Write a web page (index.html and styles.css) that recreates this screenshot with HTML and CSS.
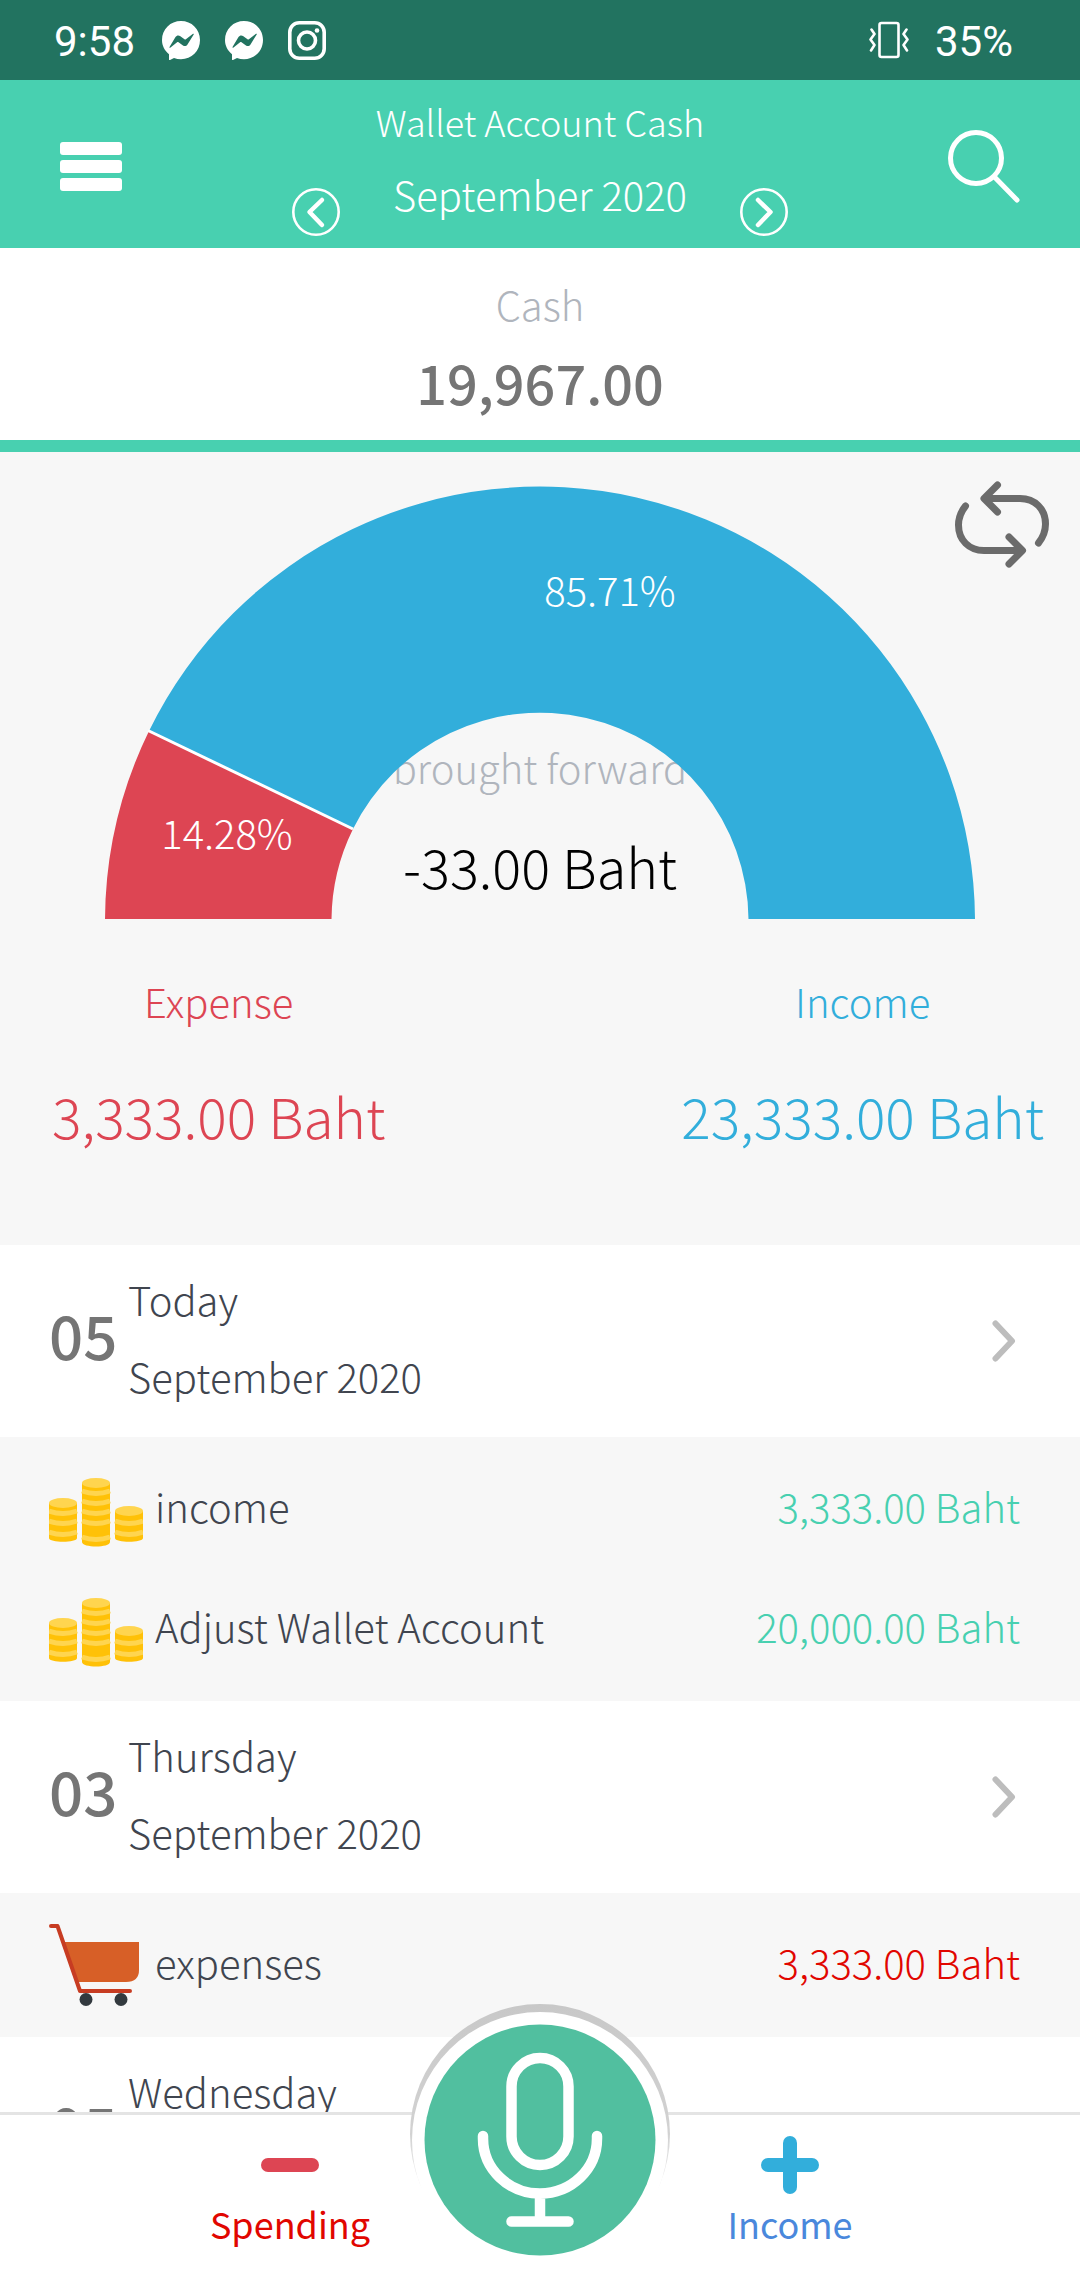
FILE: index.html
```html
<!DOCTYPE html>
<html lang="en">
<head>
<meta charset="utf-8">
<meta name="viewport" content="width=device-width, initial-scale=1">
<title>Wallet Account Cash</title>
<link rel="stylesheet" href="styles.css">
</head>
<body>
<svg class="defs" aria-hidden="true">
  <symbol id="messenger" viewBox="0 0 38 39">
    <path fill="#fff" d="M19 0C8.500 0 0 8 0 19c0 5.800 2.700 10.700 7 14.200V38.500c0 .5.500.6 1 .4l4-1.900c2.200.8 4.500 1.200 7 1.200C29.500 38.200 38 30 38 19S29.500 0 19 0z"/>
    <path fill="#227360" d="M7.500 26 13.500 16c1-1.600 3-2 4.500-1l4.500 3.200c.4.300 1 .3 1.400 0L31 12.800c.500-.3 1 .1.700.6L25.500 23.500c-1 1.600-3 2-4.500 1L16.500 21.200c-.4-.3-1-.3-1.400 0L8.200 26.700c-.5.300-1-.2-.7-.7z"/>
  </symbol>
  <symbol id="coins" viewBox="0 0 94 69">
    <g fill="#ffc107">
      <path d="M0 25v35c0 5 28 5 28 0V25z"/>
      <path d="M33 5v59c0 6 28 6 28 0V5z"/>
      <path d="M66 33v27c0 5 28 5 28 0V33z"/>
    </g>
    <g fill="#ffd54f">
      <ellipse cx="14" cy="25" rx="14" ry="5"/>
      <ellipse cx="47" cy="5" rx="14" ry="5"/>
      <ellipse cx="80" cy="33" rx="14" ry="5"/>
    </g>
    <g fill="none" stroke="#ffd54f" stroke-width="5">
      <path d="M0 33q14 5 28 0M0 43q14 5 28 0M0 54q14 5 28 0"/>
      <path d="M33 13q14 5 28 0M33 23q14 5 28 0M33 33q14 5 28 0M33 43q14 5 28 0M33 59q14 5 28 0"/>
      <path d="M66 43q14 5 28 0M66 54q14 5 28 0"/>
    </g>
  </symbol>
  <symbol id="cart" viewBox="0 0 90 82">
    <path fill="#d75f27" d="M14 18h76v28q0 12-13 12H29z"/>
    <path fill="none" stroke="#c73c22" stroke-width="4" stroke-linecap="round" stroke-linejoin="round" d="M2 2h6.500l22.500 65h50"/>
    <circle cx="37" cy="75.500" r="6.500" fill="#333a3f"/>
    <circle cx="72" cy="75.500" r="6.500" fill="#333a3f"/>
  </symbol>
  <symbol id="chevron" viewBox="0 0 24 42">
    <path fill="none" stroke="#bdbdbd" stroke-width="6" stroke-linecap="round" stroke-linejoin="round" d="M3.500 3.500 20 21 3.500 38.500"/>
  </symbol>
</svg>

<div class="app">
  <div class="status">
    <span>9:58</span>
    <div class="status-icons">
      <svg width="38" height="39"><use href="#messenger"/></svg>
      <svg width="38" height="39"><use href="#messenger"/></svg>
      <svg width="38" height="39" viewBox="0 0 38 39" fill="none" stroke="#fff" stroke-width="3.600">
        <rect x="1.800" y="1.800" width="34.400" height="35.400" rx="9.500"/>
        <circle cx="19" cy="19.500" r="8.500"/>
        <circle cx="29" cy="9.500" r="2.300" fill="#fff" stroke="none"/>
      </svg>
    </div>
    <svg class="vibrate" width="40" height="38" viewBox="0 0 40 38" fill="none" stroke="#fff" stroke-width="2.600" stroke-linecap="round" stroke-linejoin="round">
      <rect x="10.500" y="2" width="19" height="34" rx="2"/>
      <path d="M2.500 8.500 5.500 13l-4 5.500 4 5.500-3.500 5.500M37.500 8.500 34.500 13l4 5.500-4 5.500 3.500 5.500"/>
    </svg>
    <span>35%</span>
  </div>

  <header class="header">
    <button class="icon-button" aria-label="Menu">
      <svg width="62" height="49" viewBox="0 0 62 49" fill="#fff"><rect width="62" height="13" rx="3"/><rect y="18" width="62" height="13" rx="3"/><rect y="36" width="62" height="13" rx="3"/></svg>
    </button>
    <div class="header-main">
      <h1 class="title">Wallet Account Cash</h1>
      <div class="month">
        <button class="icon-button" aria-label="Previous month">
          <svg width="48" height="48" viewBox="0 0 48 48" fill="none" stroke="#fff" stroke-linecap="round" stroke-linejoin="round"><circle cx="24" cy="24" r="22.700" stroke-width="2.600"/><path stroke-width="4.500" d="M30 12 17.500 24 30 37"/></svg>
        </button>
        <span class="month-label">September 2020</span>
        <button class="icon-button" aria-label="Next month">
          <svg width="48" height="48" viewBox="0 0 48 48" fill="none" stroke="#fff" stroke-linecap="round" stroke-linejoin="round"><circle cx="24" cy="24" r="22.700" stroke-width="2.600"/><path stroke-width="4.500" d="M18 12 30.500 24 18 37"/></svg>
        </button>
      </div>
    </div>
    <button class="icon-button search" aria-label="Search">
      <svg width="72" height="73" viewBox="0 0 72 73" fill="none" stroke="#fff" stroke-width="5" stroke-linecap="round"><circle cx="28" cy="28" r="25.500"/><path d="M46.500 47 69 70"/></svg>
    </button>
  </header>

  <section class="balance">
    <div class="balance-label">Cash</div>
    <div class="balance-value">19,967.00</div>
  </section>

  <main class="content">
    <section class="summary">
      <svg class="chart" viewBox="-435 -435 870 435" role="img" aria-label="Expense 14.28%, income 85.71%">
        <text class="chart-caption" x="0" y="-135">brought forward</text>
        <text class="chart-total" x="0" y="-30">-33.00 Baht</text>
        <path fill="#dd4553" d="M-435 0A435 435 0 0 1-391-188L-187-90A208.500 208.500 0 0 0-208.500 0z"/>
        <path fill="#32aedb" d="M-391-188A435 435 0 0 1 435 0H208.500A208.500 208.500 0 0 0-187-90z"/>
        <path stroke="#fff" stroke-width="3" d="M-392-188.500-187-90"/>
        <text class="chart-percent" x="-313" y="-70">14.28%</text>
        <text class="chart-percent" x="70" y="-313">85.71%</text>
      </svg>
      <button class="icon-button swap" aria-label="Switch chart">
        <svg width="94" height="87" viewBox="0 0 94 87" fill="none" stroke="#6b6b6b" stroke-width="7" stroke-linecap="round" stroke-linejoin="round"><path d="M42.500 4 29 17.500 42.500 31M31 17.500H65C80 17.500 90.500 28 90.500 43c0 8-3 14-7 19M54 56 67.500 69.500 54 83M66 69.500H29C14 69.500 3.500 59 3.500 44c0-8 3-14 7-19"/></svg>
      </button>
      <div class="totals">
        <div class="total total-expense"><div class="total-label">Expense</div><div class="total-value">3,333.00 Baht</div></div>
        <div class="total total-income"><div class="total-label">Income</div><div class="total-value">23,333.00 Baht</div></div>
      </div>
    </section>

    <section>
      <button class="day">
        <span class="day-number">05</span>
        <span class="day-text"><span>Today</span><span>September 2020</span></span>
        <svg width="24" height="42"><use href="#chevron"/></svg>
      </button>
      <ul class="entries">
        <li class="entry"><svg class="coins" width="94" height="69"><use href="#coins"/></svg><span class="entry-text">income</span><span class="entry-text amount-in">3,333.00 Baht</span></li>
        <li class="entry"><svg class="coins" width="94" height="69"><use href="#coins"/></svg><span class="entry-text">Adjust Wallet Account</span><span class="entry-text amount-in">20,000.00 Baht</span></li>
      </ul>
    </section>

    <section>
      <button class="day">
        <span class="day-number">03</span>
        <span class="day-text"><span>Thursday</span><span>September 2020</span></span>
        <svg width="24" height="42"><use href="#chevron"/></svg>
      </button>
      <ul class="entries">
        <li class="entry"><svg width="90" height="82"><use href="#cart"/></svg><span class="entry-text">expenses</span><span class="entry-text amount-out">3,333.00 Baht</span></li>
      </ul>
    </section>

    <section>
      <button class="day">
        <span class="day-number">05</span>
        <span class="day-text"><span>Wednesday</span></span>
      </button>
    </section>
  </main>

  <nav class="nav">
    <button class="nav-item nav-spending">
      <svg width="58" height="58" viewBox="0 0 58 58"><rect y="22" width="58" height="14" rx="7" fill="#dd4553"/></svg>
      Spending
    </button>
    <button class="nav-item nav-income">
      <svg width="58" height="58" viewBox="0 0 58 58" fill="#32aedb"><rect y="22" width="58" height="14" rx="7"/><rect x="22" width="14" height="58" rx="7"/></svg>
      Income
    </button>
    <button class="icon-button mic" aria-label="Voice entry">
      <svg width="260" height="264" viewBox="0 0 260 264">
        <defs><linearGradient id="rim" x1="0" y1="0" x2="0" y2="1"><stop offset="0" stop-color="#c8c8c8"/><stop offset=".5" stop-color="#d2d2d2"/><stop offset=".8" stop-color="#fff"/></linearGradient></defs>
        <circle cx="130" cy="130" r="130" fill="url(#rim)"/>
        <circle cx="130" cy="136" r="128" fill="#fff"/>
        <circle cx="130" cy="136" r="115.500" fill="#51bf9f"/>
        <g fill="none" stroke="#fff" stroke-width="10.500" stroke-linecap="round">
          <rect x="101.500" y="54" width="57" height="107" rx="28.500"/>
          <path d="M73 132v2.500a57 55 0 0 0 114 0V132M130 190v27M101.500 217.500h57"/>
        </g>
      </svg>
    </button>
  </nav>
</div>
</body>
</html>
```
FILE: styles.css
```css
* { box-sizing: border-box; }

body {
  margin: 0;
  color: #40454f;
  background: #fff;
  font-family: "Noto Sans CJK JP", "Noto Sans", sans-serif;
  font-size: 40px;
  font-weight: 300;
}

button {
  margin: 0;
  padding: 0;
  border: 0;
  background: none;
  color: inherit;
  font: inherit;
  cursor: pointer;
}

svg { display: block; flex: none; }

.defs { position: absolute; width: 0; height: 0; }

.app {
  display: flex;
  flex-direction: column;
  height: 100vh;
}

/* Status bar */
.status {
  display: flex;
  align-items: center;
  flex: none;
  height: 80px;
  padding: 0 67px 0 54px;
  background: #227360;
  color: #fff;
  font: 400 42px/48px Roboto, sans-serif;
}
.status span { padding-top: 3px; }
.status-icons { display: flex; gap: 25px; margin-left: 27px; }
.vibrate { margin: 0 26px 0 auto; }

/* Header */
.header {
  display: grid;
  grid-template-columns: 1fr 496px 1fr;
  align-items: center;
  flex: none;
  padding: 16px 60px 12px;
  background: #48d0b0;
  color: #fff;
}
.icon-button { display: block; line-height: 0; justify-self: start; }
.search { justify-self: end; }
.title {
  margin: 0 0 24px;
  font-size: 36px;
  font-weight: 300;
  line-height: 50px;
  text-align: center;
}
.month { display: flex; justify-content: space-between; align-items: flex-end; }
.month-label { padding-bottom: 18px; line-height: 48px; }

/* Balance */
.balance {
  flex: none;
  padding: 28px 0 26px;
  border-bottom: 12px solid #48d0b0;
  text-align: center;
}
.balance-label { margin-bottom: 18px; color: #b0b5bd; line-height: 56px; }
.balance-value { color: #757575; font-size: 54px; font-weight: 500; line-height: 64px; }

.content { flex: 1; min-height: 0; overflow-y: auto; scrollbar-width: none; }

/* Chart */
.summary { position: relative; padding: 32px 0 94px; background: #f7f7f7; }
.chart { width: 100%; max-width: 870px; margin: 0 auto; }
.chart text { text-anchor: middle; }
.chart-caption { fill: #b0b5bd; }
.chart-total { fill: #000; font-size: 54px; }
.chart-percent { fill: #fff; }
.swap { position: absolute; top: 29px; right: 31px; }

.totals {
  display: flex;
  justify-content: space-between;
  padding: 54px 36px 0 52px;
  text-align: center;
}
.total-label { margin-bottom: 50px; line-height: 56px; }
.total-value { font-size: 55px; line-height: 72px; }
.total-expense { color: #dd4553; }
.total-income { color: #32aedb; }

/* Days and entries */
.day {
  display: flex;
  align-items: center;
  width: 100%;
  height: 192px;
  padding: 0 64px 0 49px;
  background: #fff;
  text-align: left;
}
.day-number {
  width: 79px;
  padding-bottom: 14px;
  color: #757575;
  font-size: 60px;
  font-weight: 500;
  line-height: 64px;
}
.day-text { display: flex; flex: 1; flex-direction: column; height: 160px; line-height: 77px; }

.entries { margin: 0; padding: 12px 0; background: #f7f7f7; list-style: none; }
.entry {
  display: grid;
  grid-template-columns: 96px 1fr auto;
  align-items: center;
  gap: 10px;
  height: 120px;
  padding: 0 60px 0 49px;
}
.entry-text { padding-bottom: 7px; line-height: 56px; }
.coins { margin-top: 6px; }
.amount-in { color: #48d0b0; }
.amount-out { color: #e10600; }

/* Bottom bar */
.nav {
  position: relative;
  display: flex;
  justify-content: center;
  flex: none;
  gap: 260px;
  padding: 21px 0 33px;
  border-top: 3px solid #e4e4e4;
  background: #fff;
}
.nav-item {
  display: flex;
  flex-direction: column;
  align-items: center;
  gap: 5px;
  width: 240px;
  font-size: 36px;
  font-weight: 400;
  line-height: 48px;
}
.nav-spending { color: #e10600; }
.nav-income { color: #4a88dc; }
.mic { position: absolute; top: -111px; left: 50%; transform: translateX(-50%); }
```
